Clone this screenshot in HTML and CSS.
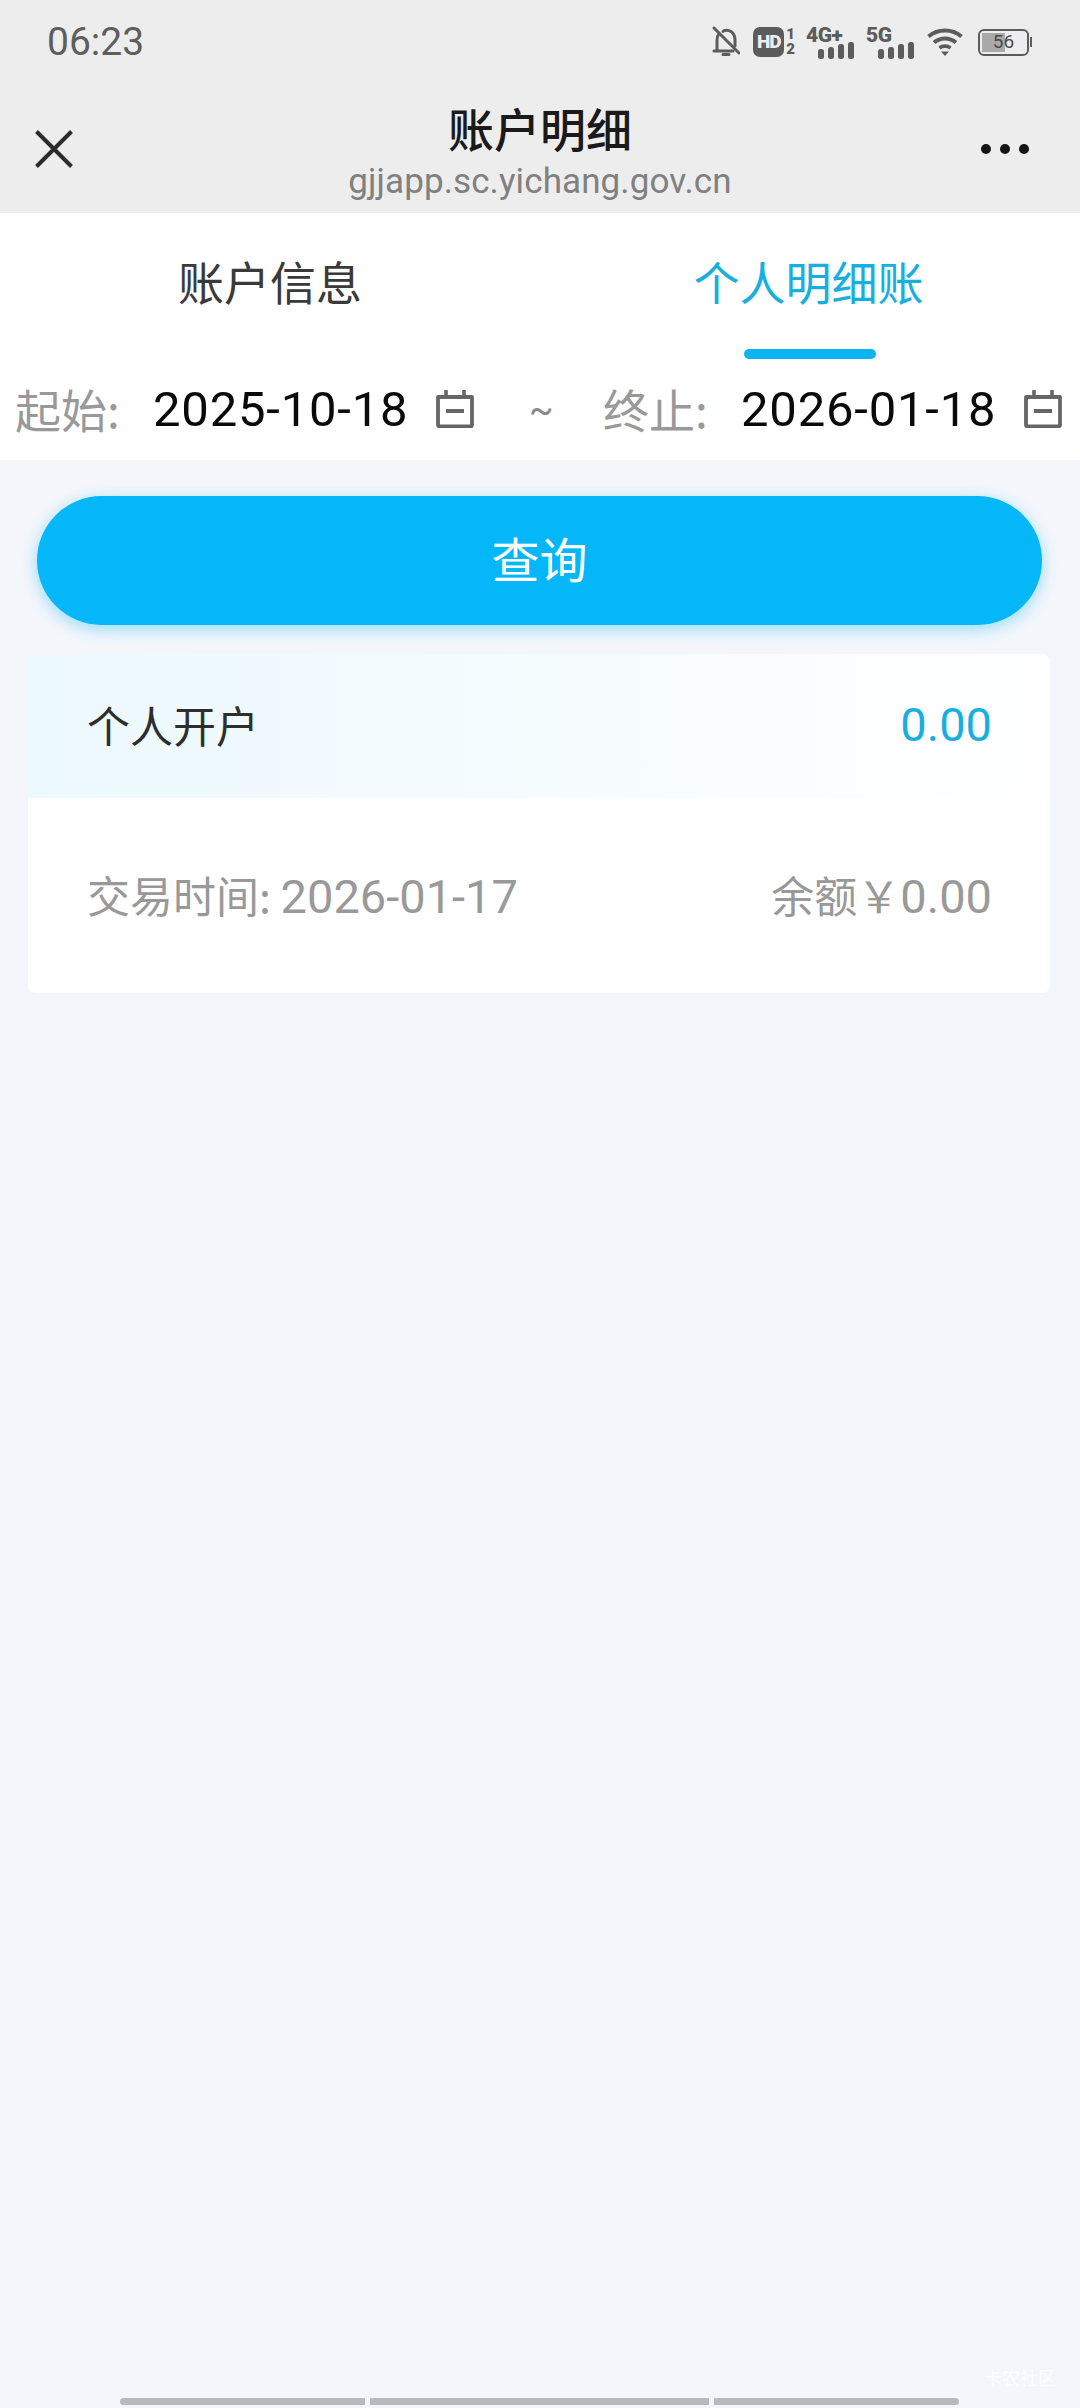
FILE: index.html
```html
<!DOCTYPE html>
<html lang="zh-CN">
<head>
    <meta charset="UTF-8">
    <meta name="viewport" content="width=device-width, initial-scale=1.0">
    <title>账户明细</title>
    <link rel="stylesheet" href="styles.css">
</head>
<body>

    <!-- Status bar + title bar -->
    <div class="top">
        <div class="status">
            <span class="time">06:23</span>
            <div class="status-icons">
                <svg class="ic-bell" width="28" height="32" viewBox="0 0 28 32">
                    <path d="M5 24V14C5 11 6 9 7 8M11 5.5C12 4 16 3.6 19 5.5C22 7.5 23 10.5 23 14V20M2 25H21M11 28.5H17" fill="none" stroke="#5c5c5c" stroke-width="3" stroke-linecap="round"/>
                    <path d="M2 2L27 27" stroke="#5c5c5c" stroke-width="3" stroke-linecap="round"/>
                </svg>
                <div class="hd-wrap">
                    <span class="hd">HD</span>
                    <span class="hd-nums"><span>1</span><span>2</span></span>
                </div>
                <div class="net net-4g">
                    <span class="net-label">4G+</span>
                    <svg width="36" height="17" viewBox="0 0 36 17">
                        <rect x="0" y="7" width="6" height="10" rx="2.5"/>
                        <rect x="10" y="5" width="6" height="12" rx="2.5"/>
                        <rect x="20" y="2" width="6" height="15" rx="2.5"/>
                        <rect x="30" y="0" width="6" height="17" rx="2.5"/>
                    </svg>
                </div>
                <div class="net net-5g">
                    <span class="net-label">5G</span>
                    <svg width="36" height="17" viewBox="0 0 36 17">
                        <rect x="0" y="7" width="6" height="10" rx="2.5"/>
                        <rect x="10" y="5" width="6" height="12" rx="2.5"/>
                        <rect x="20" y="2" width="6" height="15" rx="2.5"/>
                        <rect x="30" y="0" width="6" height="17" rx="2.5"/>
                    </svg>
                </div>
                <svg class="ic-wifi" width="36" height="28" viewBox="0 0 36 28">
                    <path d="M1.5 8.5C11 0.5 25 0.5 34.5 8.5" fill="none" stroke="#5c5c5c" stroke-width="4"/>
                    <path d="M7 14.5C13.5 9 22.5 9 29 14.5" fill="none" stroke="#5c5c5c" stroke-width="4"/>
                    <path d="M12.5 20C15.5 17.5 20.5 17.5 23.5 20" fill="none" stroke="#5c5c5c" stroke-width="3.6"/>
                    <path d="M14 23.5H22L18 28Z" fill="#5c5c5c"/>
                </svg>
                <div class="battery">
                    <div class="battery-body">
                        <div class="battery-fill"></div>
                        <span class="battery-num">56</span>
                    </div>
                    <div class="battery-tip"></div>
                </div>
            </div>
        </div>
        <div class="nav">
            <svg class="ic-close" width="38" height="38" viewBox="0 0 38 38">
                <path d="M1.5 1.5L36.5 36.5M36.5 1.5L1.5 36.5" stroke="#2b2b2b" stroke-width="4"/>
            </svg>
            <div class="nav-title">
                <div class="title">账户明细</div>
                <div class="url">gjjapp.sc.yichang.gov.cn</div>
            </div>
            <div class="more"><i></i><i></i><i></i></div>
        </div>
    </div>

    <!-- Tabs -->
    <div class="tabs">
        <div class="tab">账户信息</div>
        <div class="tab active">个人明细账</div>
    </div>

    <!-- Date range -->
    <div class="dates">
        <span class="date-label">起始:</span>
        <span class="date-val">2025-10-18</span>
        <svg class="ic-cal" width="38" height="38" viewBox="0 0 38 38">
            <path d="M2 7H36V35C36 36 35 36.5 34 36.5H4C3 36.5 2 36 2 35Z" fill="none" stroke="#666" stroke-width="3.8" stroke-linejoin="round"/>
            <path d="M10 0V7M28 0V7" stroke="#666" stroke-width="3.6"/>
            <path d="M10 21H28" stroke="#666" stroke-width="4"/>
        </svg>
        <span class="tilde">~</span>
        <span class="date-label">终止:</span>
        <span class="date-val">2026-01-18</span>
        <svg class="ic-cal" width="38" height="38" viewBox="0 0 38 38">
            <path d="M2 7H36V35C36 36 35 36.5 34 36.5H4C3 36.5 2 36 2 35Z" fill="none" stroke="#666" stroke-width="3.8" stroke-linejoin="round"/>
            <path d="M10 0V7M28 0V7" stroke="#666" stroke-width="3.6"/>
            <path d="M10 21H28" stroke="#666" stroke-width="4"/>
        </svg>
    </div>

    <div class="content">
        <button class="query">查询</button>

        <div class="card">
            <div class="card-head">
                <span class="card-name">个人开户</span>
                <span class="card-amount">0.00</span>
            </div>
            <div class="card-row">
                <span>交易时间: <span class="num">2026-01-17</span></span>
                <span>余额￥<span class="num">0.00</span></span>
            </div>
        </div>
    </div>

    <!-- Gesture bar and watermark -->
    <div class="watermark">卡农社区</div>
    <div class="gesture"><i class="g1"></i><i class="g2"></i><i class="g3"></i></div>

</body>
</html>
```

FILE: styles.css
```css
* { box-sizing: border-box; }
html, body { margin: 0; padding: 0; }
body {
    width: 1080px;
    height: 2408px;
    position: relative;
    overflow: hidden;
    background: #f4f6fb;
    font-family: Roboto, "Noto Sans CJK SC", sans-serif;
}

.top { background: #ededed; height: 213px; }
.status {
    height: 84px;
    display: flex;
    justify-content: space-between;
    align-items: center;
    padding: 0 48px 0 47px;
}
.time { font-size: 39px; color: #5e5e5e; }
.status-icons { display: flex; align-items: center; height: 40px; }
.ic-bell { margin-right: 13px; }
.hd-wrap { display: flex; align-items: center; margin-right: 11px; }
.hd {
    width: 31px;
    height: 30px;
    background: #5c5c5c;
    color: #ededed;
    border-radius: 7px;
    font-size: 19px;
    font-weight: 900;
    line-height: 30px;
    text-align: center;
    letter-spacing: -1px;
}
.hd-nums {
    display: flex;
    flex-direction: column;
    margin-left: 2px;
    color: #5c5c5c;
    font-size: 15px;
    font-weight: 900;
    line-height: 15px;
}
.net { width: 48px; display: flex; flex-direction: column; align-items: flex-end; }
.net svg { fill: #5c5c5c; display: block; margin-top: -3px; }
.net-label {
    align-self: flex-start;
    color: #5c5c5c;
    font-size: 21px;
    font-weight: 900;
    line-height: 20px;
    letter-spacing: -0.5px;
}
.net-4g { margin-right: 12px; }
.net-5g { margin-right: 13px; }
.ic-wifi { margin-right: 15px; }
.battery { display: flex; align-items: center; }
.battery-body {
    width: 51px;
    height: 27px;
    border: 2.5px solid #5c5c5c;
    border-radius: 6px;
    position: relative;
    display: flex;
    align-items: center;
    justify-content: center;
}
.battery-fill {
    position: absolute;
    left: 2px;
    top: 2px;
    bottom: 2px;
    width: 23px;
    background: #a9a9a9;
}
.battery-num { position: relative; font-size: 19px; color: #4a4a4a; line-height: 22px; }
.battery-tip { width: 2px; height: 10px; margin-left: 1px; background: #5c5c5c; }

.nav {
    height: 129px;
    position: relative;
    display: flex;
    align-items: center;
    justify-content: space-between;
    padding: 0 51px 0 35px;
}
.ic-close { display: block; }
.nav-title {
    position: absolute;
    left: 0;
    right: 0;
    top: 16px;
    text-align: center;
}
.title {
    font-size: 46px;
    line-height: 54px;
    font-weight: 500;
    color: #1a1a1a;
    font-family: "Noto Sans CJK SC", sans-serif;
}
.url { font-size: 35px; line-height: 56px; color: #808080; letter-spacing: 0.1px; }
.more { display: flex; gap: 9px; }
.more i { width: 10px; height: 10px; border-radius: 50%; background: #141414; }

.tabs { background: #fff; height: 146px; display: flex; }
.tab {
    width: 50%;
    text-align: center;
    font-size: 46px;
    line-height: 60px;
    padding-top: 37px;
    color: #3a3a3a;
    font-family: "Noto Sans CJK SC", sans-serif;
    position: relative;
}
.tab.active { color: #17aee0; padding-right: 3px; }
.tab.active::after {
    content: "";
    position: absolute;
    left: 204px;
    bottom: 0;
    width: 132px;
    height: 10px;
    border-radius: 5px;
    background: #0db4f3;
}

.dates {
    background: #fff;
    height: 101px;
    display: flex;
    align-items: center;
    padding: 0 0 0 15px;
}
.date-label {
    font-size: 46px;
    color: #999;
    width: 138px;
    margin-top: -4px;
    font-family: "Noto Sans CJK SC", sans-serif;
}
.date-val { font-size: 49px; letter-spacing: 0.8px; color: #0a0a0a; width: 284px; white-space: nowrap; }
.ic-cal { display: block; flex: none; margin-top: -2px; margin-left: -1px; margin-right: 1px; }
.tilde { width: 128px; padding-left: 54px; font-size: 36px; color: #888; }

.content { padding: 36px 28px 0; }
.query {
    display: block;
    width: 1005px;
    height: 129px;
    margin: 0 0 0 9px;
    padding: 0 0 8px;
    border: 0;
    border-radius: 65px;
    background: #04b7f9;
    color: #fff;
    font-size: 48px;
    font-family: "Noto Sans CJK SC", sans-serif;
    box-shadow: 0 4px 16px rgba(6, 182, 248, 0.4);
}

.card {
    margin-top: 29px;
    width: 1022px;
    height: 339px;
    background: #fff;
    border-radius: 8px;
    overflow: hidden;
    font-family: "Noto Sans CJK SC", Roboto, sans-serif;
}
.card-head {
    height: 144px;
    display: flex;
    justify-content: space-between;
    align-items: center;
    padding: 0 58px 4px 59px;
    background: linear-gradient(90deg, #ecf9fe 0%, #ffffff 100%);
}
.card-name { font-size: 43px; color: #2e2e2e; }
.card-amount { font-size: 47px; color: #17aee0; font-family: Roboto, sans-serif; }
.card-row {
    height: 195px;
    display: flex;
    justify-content: space-between;
    align-items: center;
    padding: 0 58px 4px 59px;
    font-size: 43px;
    color: #999;
}
.num { font-family: Roboto, sans-serif; font-size: 47px; }

.watermark {
    position: absolute;
    right: 24px;
    bottom: 18px;
    font-size: 18px;
    color: #fdfdfe;
    font-family: "Noto Sans CJK SC", sans-serif;
}
.gesture {
    position: absolute;
    left: 120px;
    bottom: 3px;
    display: flex;
    gap: 5px;
}
.gesture i { display: block; height: 7px; background: #b8b9bd; }
.g1 { width: 245px; border-radius: 4px 0 0 4px; }
.g2 { width: 339px; }
.g3 { width: 245px; border-radius: 0 4px 4px 0; }
```
